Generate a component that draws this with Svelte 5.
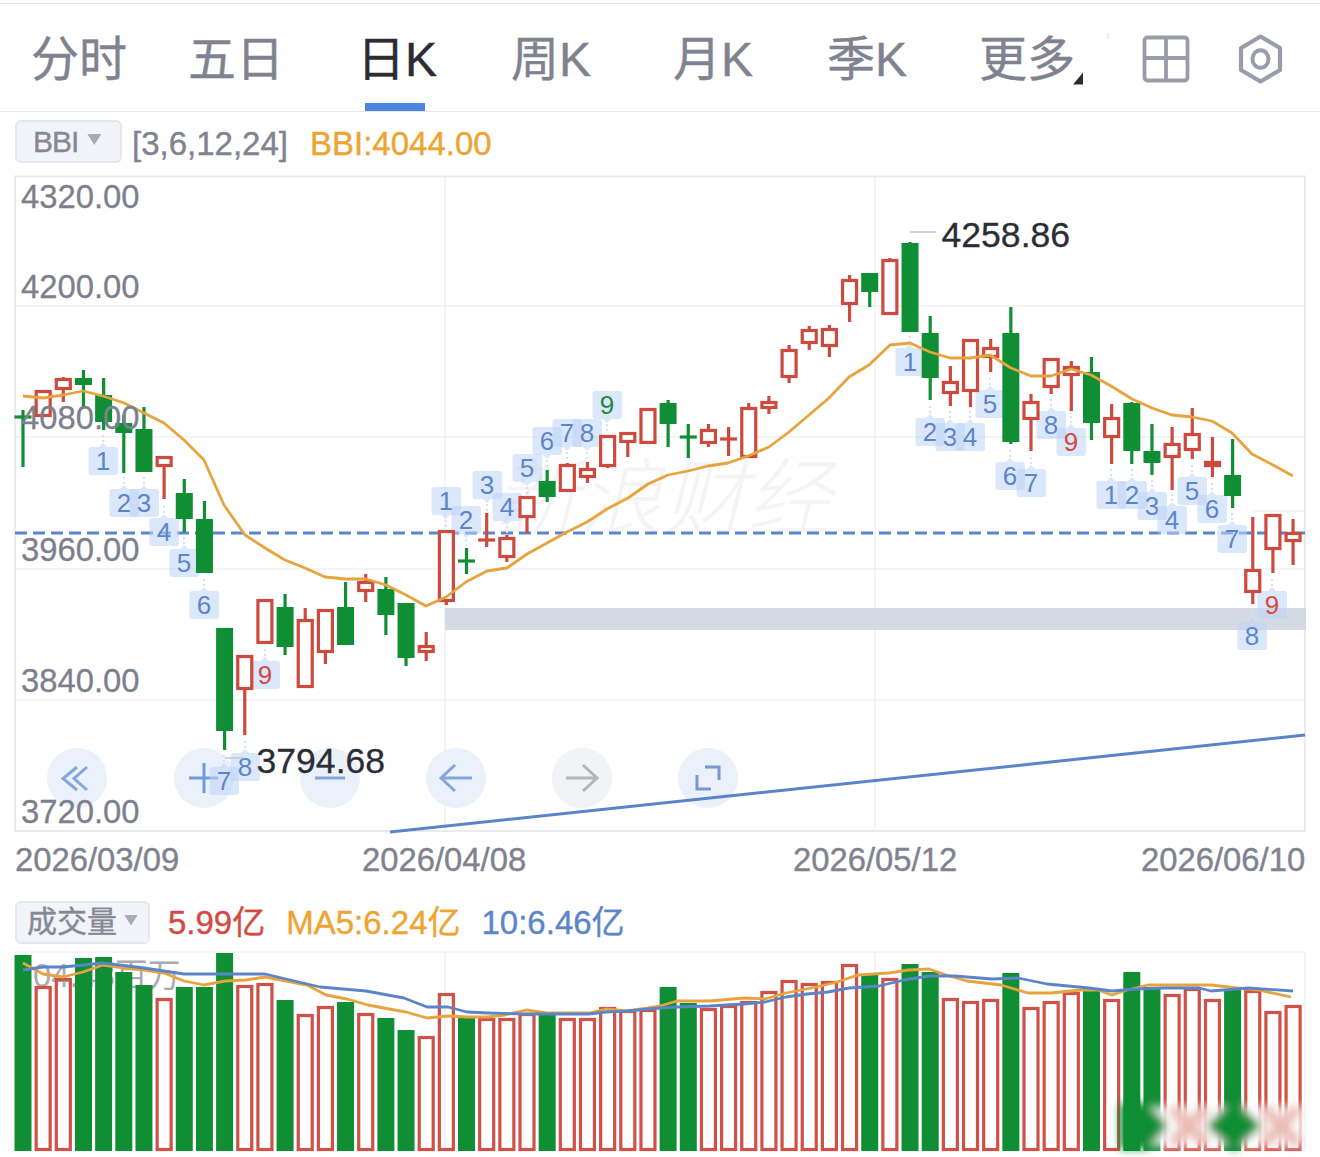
<script>
  const tabs = ["分时", "五日", "日K", "周K", "月K", "季K", "更多"];

  // kind, wick top, body top, body bottom, wick bottom
  const candles = [
    ["g", 410, 417, 417, 467], ["r", 390, 390, 417, 417], ["r", 377, 378, 390, 402], ["g", 370, 378, 385, 407],
    ["g", 378, 395, 422, 430], ["g", 415, 423, 433, 473], ["g", 407, 429, 472, 472], ["r", 456, 456, 467, 499],
    ["g", 479, 493, 519, 532], ["g", 501, 519, 573, 573], ["g", 628, 628, 731, 750], ["r", 655, 655, 690, 735],
    ["r", 599, 599, 644, 644], ["g", 594, 607, 647, 655], ["r", 608, 619, 688, 688], ["r", 609, 609, 653, 664],
    ["g", 582, 607, 645, 645], ["r", 574, 581, 592, 602], ["g", 577, 589, 615, 635], ["g", 603, 603, 658, 666],
    ["r", 632, 645, 653, 661], ["r", 530, 530, 602, 605], ["g", 548, 561, 561, 574], ["r", 513, 540, 540, 547],
    ["r", 535, 537, 558, 562], ["r", 496, 496, 518, 533], ["g", 470, 481, 497, 502], ["r", 463, 464, 492, 492],
    ["r", 462, 468, 478, 483], ["r", 435, 435, 467, 468], ["r", 432, 432, 443, 457], ["r", 408, 408, 444, 444],
    ["g", 400, 403, 424, 447], ["g", 424, 437, 437, 458], ["r", 424, 429, 444, 447], ["r", 427, 439, 439, 456],
    ["r", 403, 407, 458, 458], ["r", 396, 401, 409, 414], ["r", 345, 349, 378, 383], ["r", 326, 329, 344, 350],
    ["r", 325, 328, 347, 357], ["r", 275, 279, 305, 322], ["g", 273, 273, 292, 307], ["r", 258, 259, 315, 315],
    ["g", 242, 243, 332, 332], ["g", 316, 333, 378, 400], ["r", 366, 381, 394, 406], ["r", 339, 339, 392, 407],
    ["r", 339, 347, 358, 372], ["g", 307, 333, 442, 444], ["r", 394, 401, 420, 451], ["r", 358, 358, 388, 394],
    ["r", 361, 366, 376, 411], ["g", 357, 372, 423, 440], ["r", 404, 417, 438, 464], ["g", 402, 403, 451, 464],
    ["g", 424, 451, 463, 475], ["r", 427, 443, 458, 490], ["r", 408, 433, 451, 459], ["r", 437, 461, 467, 477],
    ["g", 439, 475, 496, 508], ["r", 517, 569, 593, 604], ["r", 514, 514, 550, 573], ["r", 519, 532, 542, 565]
  ];

  const cx = (i) => 23 + i * 20.16;

  // sequence markers: x, y, digit, colour, pointer side
  const marks = [
    [103, 461, "1"], [124, 503, "2"], [144, 503, "3"], [164, 532, "4"], [184, 563, "5"], [204, 605, "6"],
    [224, 781, "7"], [245, 767, "8"], [265, 675, "9", "red"],
    [446, 501, "1", "", 1], [466, 520, "2", "", 1], [487, 485, "3", "", 1], [507, 507, "4", "", 1], [527, 468, "5", "", 1],
    [547, 441, "6", "", 1], [567, 433, "7", "", 1], [587, 433, "8", "", 1], [607, 405, "9", "green", 1],
    [910, 362, "1"], [930, 432, "2"], [950, 437, "3"], [970, 437, "4"], [990, 404, "5"], [1010, 476, "6"], [1031, 483, "7"],
    [1051, 425, "8"], [1071, 442, "9", "red"],
    [1111, 495, "1"], [1132, 495, "2"], [1152, 506, "3"], [1172, 520, "4"], [1192, 491, "5"], [1212, 509, "6"], [1232, 539, "7"],
    [1252, 636, "8"], [1272, 605, "9", "red"]
  ];

  const bbi = "23,396 43,398 63,395 83,391 103,396 124,403 144,413 164,423 184,440 204,460 224,505 245,535 265,548 285,560 305,568 325,577 346,579 366,579 386,585 406,595 426,606 446,597 466,582 487,571 507,568 527,554 547,543 567,532 587,522 607,509 628,498 648,484 668,475 688,471 708,466 728,463 748,456 769,447 789,432 809,415 829,398 849,377 869,365 890,345 910,343 930,352 950,358 970,358 990,355 1011,368 1031,376 1051,376 1071,369 1091,375 1111,386 1132,399 1152,408 1172,415 1192,417 1212,421 1232,433 1252,454 1273,465 1293,476";

  const axis = [["4320.00", 208], ["4200.00", 298], ["4080.00", 429], ["3960.00", 561], ["3840.00", 692], ["3720.00", 823]];

  const volTops = [955, 986, 978, 958, 957, 972, 985, 998, 987, 987, 953, 985, 983, 1000, 1014, 1006, 1002, 1013, 1018, 1030, 1036, 993, 1018, 1018, 1018, 1013, 1012, 1018, 1018, 1007, 1010, 1009, 987, 1003, 1008, 1005, 1001, 991, 980, 983, 981, 964, 975, 978, 964, 972, 998, 1001, 999, 973, 1007, 1001, 992, 989, 999, 972, 987, 994, 988, 999, 990, 990, 1011, 1005];
  // green bars by index, everything else is red
  const volGreen = new Set([0, 3, 4, 5, 6, 8, 9, 10, 13, 16, 18, 19, 22, 26, 32, 33, 42, 44, 45, 49, 53, 55, 56, 60]);

  const ma5 = "23,963 43,974 63,977 83,972 103,965 124,968 144,970 164,973 184,981 204,985 225,981 246,980 265,977 286,981 307,985 326,995 347,999 368,1005 389,1009 406,1012 427,1018 448,1016 467,1017 488,1017 505,1015 526,1010 547,1013 568,1013 589,1013 606,1009 627,1011 648,1008 660,1006 677,1001 710,1001 744,998 765,999 786,993 816,987 837,982 858,975 889,973 908,970 929,969 946,975 967,981 1001,985 1028,993 1051,993 1081,990 1098,990 1112,995 1127,990 1148,985 1211,985 1237,988 1258,990 1291,997";
  const ma10 = "23,970 43,967 63,967 83,965 103,963 144,968 184,974 225,974 265,974 286,979 320,987 366,991 404,998 427,1007 448,1007 467,1012 488,1013 526,1014 589,1014 606,1012 627,1011 660,1008 677,1007 710,1006 744,1004 765,1002 786,997 807,994 828,992 849,988 879,986 904,980 929,976 955,976 992,979 1018,978 1047,984 1089,988 1112,991 1136,989 1165,988 1199,988 1211,991 1249,988 1293,991";
</script>

<div class="page">
  <header class="top">
    <div class="tabs">
      {#each tabs as t, i}
        <div class="tab" class:active={i === 2} class:more={i === 6}>{t}</div>
      {/each}
    </div>
    <svg class="tools" width="196" height="107" viewBox="1124 4 196 107">
      <line x1="1108" y1="33" x2="1108" y2="39" stroke="#dcdde2" />
      <rect x="1144.5" y="37.5" width="43" height="43" rx="3" fill="none" stroke="#9a9da9" stroke-width="3.800" />
      <path d="M1166 38v42M1145 58h42" stroke="#9a9da9" stroke-width="3.800" fill="none" />
      <path d="M1260.5 36.5l19.5 11.5v22l-19.5 11.5l-19.5-11.5v-22z" fill="none" stroke="#9a9da9" stroke-width="4.200" stroke-linejoin="round" />
      <ellipse cx="1260.5" cy="59" rx="8" ry="8.800" fill="none" stroke="#9a9da9" stroke-width="4" />
    </svg>
  </header>

  <div class="indicator">
    <div class="picker bbi">BBI<span class="caret"></span></div>
    <span class="params">[3,6,12,24]</span>
    <span class="orange">BBI:4044.00</span>
  </div>

  <svg class="chart" width="1320" height="660" viewBox="0 175 1320 660">
    <g stroke="#eef0f3" stroke-width="1.5">
      <line x1="15" y1="306" x2="1305" y2="306" />
      <line x1="15" y1="437" x2="1305" y2="437" />
      <line x1="15" y1="569" x2="1305" y2="569" />
      <line x1="15" y1="700" x2="1305" y2="700" />
      <line x1="1253" y1="511" x2="1305" y2="511" />
      <line x1="445" y1="176" x2="445" y2="831" />
      <line x1="875" y1="176" x2="875" y2="831" />
    </g>
    <rect x="15" y="176.5" width="1290" height="654.5" fill="none" stroke="#e9ebef" stroke-width="2" />

    <text class="watermark" x="495" y="528">新浪财经</text>

    <rect x="445" y="608" width="861" height="22" fill="#d5dbe5" />

    <g fill="#ebf1fb">
      <circle cx="77" cy="778" r="30" />
      <circle cx="204" cy="778" r="30" />
      <circle cx="330" cy="778" r="30" />
      <circle cx="456" cy="778" r="30" />
      <circle cx="708" cy="778" r="30" />
    </g>
    <circle cx="582" cy="778" r="30" fill="#f2f3f6" />
    <g fill="none" stroke="#83a6dc" stroke-width="3">
      <path d="M77 767L63 778.500L77 790M87 767L74 778.500L87 790" />
      <path d="M189 778h29M204 763v30" stroke="#6f9bdb" />
      <path d="M315 778h30" />
      <path d="M472 778h-30M455 765l-14 13l14 13" />
      <path d="M705 767h14v13M697 775v14h14" stroke="#7898d0" />
    </g>
    <path d="M566 778h30M583 765l14 13l-14 13" fill="none" stroke="#b3b5bd" stroke-width="3" />

    <line x1="15" y1="533" x2="1305" y2="533" stroke="#5b85d0" stroke-width="3" stroke-dasharray="12 6" />
    <line x1="390" y1="832" x2="1305" y2="735" stroke="#5a84c8" stroke-width="3" />

    {#each marks as [x, y, digit, tone, above]}
      <g>
        <rect class="mark" x={x - 14.500} y={y - 14} width="29.500" height="28" rx="3" />
        {#if above}
          <path class="mark" d="M{x - 4} {y + 14}h8l-4 4z" />
          <line class="dots" x1={x} y1={y + 19} x2={x} y2={y + 28} />
        {:else}
          <path class="mark" d="M{x - 4} {y - 14}h8l-4 -4z" />
          <line class="dots" x1={x} y1={y - 19} x2={x} y2={y - 28} />
        {/if}
        <text class="digit {tone}" {x} y={y + 9}>{digit}</text>
      </g>
    {/each}

    {#each candles as [kind, wt, bt, bb, wb], i}
      <g stroke={kind === "r" ? "#cc4a3e" : "#0f8e34"}>
        <line x1={cx(i)} x2={cx(i)} y1={wt} y2={wb} stroke-width="3.200" />
        {#if bt === bb}
          <line x1={cx(i) - 8.500} x2={cx(i) + 8.500} y1={bt} y2={bt} stroke-width="3.200" />
        {:else if kind === "r"}
          <rect x={cx(i) - 7} y={bt + 1.500} width="14" height={bb - bt - 3} fill="#fff" stroke-width="3.200" />
        {:else}
          <rect x={cx(i) - 8.500} y={bt} width="17" height={bb - bt} fill="#0f8e34" stroke="none" />
        {/if}
      </g>
    {/each}

    <polyline points={bbi} fill="none" stroke="#e7a33e" stroke-width="2.800" stroke-linejoin="round" />

    <line x1="910" y1="232" x2="936" y2="232" stroke="#c4c5c9" stroke-width="1.500" />
    <line x1="225" y1="758" x2="244" y2="758" stroke="#c4c5c9" stroke-width="1.500" />
    <text class="peak" x="941.500" y="247">4258.86</text>
    <text class="peak" x="256.500" y="773">3794.68</text>

    {#each axis as [label, y]}
      <text class="axis" x="21" {y}>{label}</text>
    {/each}
  </svg>

  <div class="dates">
    <span>2026/03/09</span>
    <span>2026/04/08</span>
    <span>2026/05/12</span>
    <span>2026/06/10</span>
  </div>

  <div class="indicator vol-head">
    <div class="picker vol">成交量<span class="caret"></span></div>
    <span class="red">5.99亿</span>
    <span class="orange">MA5:6.24亿</span>
    <span class="blue">10:6.46亿</span>
  </div>

  <svg class="chart" width="1320" height="207" viewBox="0 950 1320 207">
    <defs>
      <filter id="smear" x="-10%" y="-20%" width="120%" height="140%">
        <feGaussianBlur stdDeviation="4" />
      </filter>
    </defs>
    <g stroke="#eef0f3" stroke-width="1.500">
      <line x1="15" y1="952" x2="1305" y2="952" />
      <line x1="445" y1="952" x2="445" y2="1151" />
      <line x1="875" y1="952" x2="875" y2="1151" />
      <line x1="1305" y1="952" x2="1305" y2="1151" />
    </g>
    <text class="ghost" x="33" y="987">04.43百万</text>

    {#each volTops as top, i}
      {#if volGreen.has(i)}
        <rect x={cx(i) - 8.500} y={top} width="17" height={1151 - top} fill="#0f8e34" />
      {:else}
        <rect x={cx(i) - 7} y={top + 1.500} width="14" height={1151 - top - 3} fill="none" stroke="#cf5147" stroke-width="3.200" />
      {/if}
    {/each}

    <polyline points={ma5} fill="none" stroke="#e7a33e" stroke-width="2.800" stroke-linejoin="round" />
    <polyline points={ma10} fill="none" stroke="#5c84c8" stroke-width="2.800" stroke-linejoin="round" />

    <g filter="url(#smear)">
      <rect x="1122" y="1106" width="183" height="40" fill="#fff" opacity="0.85" />
      <path d="M1172 1108l34 36M1206 1108l-34 36M1264 1108l34 36M1298 1108l-34 36" stroke="#eabbb5" stroke-width="12" fill="none" />
      <path d="M1120 1103h28l20 23l-20 23h-28z" fill="#0f8e34" />
      <path d="M1234 1099l28 27l-28 25l-28 -25z" fill="#0f8e34" />
    </g>
  </svg>
</div>

<style>
  :global(body) {
    margin: 0;
    background: #fff;
  }

  .page {
    position: relative;
    width: 1320px;
    height: 1157px;
    overflow: hidden;
    font-family: "Liberation Sans", "Noto Sans CJK SC", sans-serif;
    color: #80838f;
    -webkit-text-stroke: 0.4px;
  }

  .top {
    display: flex;
    box-sizing: border-box;
    height: 109px;
    margin-top: 3px;
    border-top: 1px solid #e5e6ea;
    border-bottom: 1px solid #e7e8ec;
  }

  .tabs {
    display: grid;
    grid-template-columns: 158px 156px 166px 142px 182px 126px 194px;
    width: 1124px;
    align-items: center;
    padding-top: 4px;
    box-sizing: border-box;
  }

  .tab {
    position: relative;
    font-size: 48px;
    line-height: 1;
    text-align: center;
  }

  .tab.active {
    color: #2b2c33;
  }

  .tab.active::after {
    content: "";
    position: absolute;
    left: 51px;
    top: 67px;
    width: 60px;
    height: 8px;
    background: #4a86dc;
  }

  .tab.more::after {
    content: "";
    position: absolute;
    left: 143px;
    top: 37px;
    width: 10px;
    height: 12px;
    background: #2b2c33;
    clip-path: polygon(100% 0, 100% 100%, 0 100%);
  }

  .tools {
    display: block;
    overflow: visible;
  }

  .indicator {
    display: flex;
    align-items: center;
    height: 63px;
    padding-left: 15px;
    font-size: 33px;
    line-height: 1;
  }

  .picker {
    display: flex;
    align-items: center;
    box-sizing: border-box;
    height: 43px;
    margin-top: -4px;
    background: #f3f4fa;
    border: 2px solid #e4e6f0;
    border-radius: 6px;
    color: #868995;
  }

  .bbi {
    width: 107px;
    padding-left: 16px;
    font-size: 30px;
    letter-spacing: -1px;
  }

  .vol {
    width: 135px;
    padding-left: 10px;
    font-size: 30px;
  }

  .caret {
    width: 14px;
    height: 11px;
    margin-left: 9px;
    margin-top: -4px;
    background: #a9abb8;
    clip-path: polygon(0 0, 100% 0, 50% 100%);
  }

  .vol .caret {
    margin-left: 7px;
  }

  .params {
    margin-left: 10px;
    color: #80838f;
  }

  .orange {
    margin-left: 22px;
    color: #eda433;
  }

  .vol-head {
    box-sizing: border-box;
    height: 65px;
    padding-top: 9px;
  }

  .vol-head .picker {
    margin-top: 0;
  }

  .vol-head .red {
    margin-left: 18px;
    color: #d34b3f;
  }

  .vol-head .orange {
    margin-left: 21px;
  }

  .vol-head .blue {
    margin-left: 21px;
    color: #5b86c9;
  }

  .chart {
    display: block;
    overflow: hidden;
  }

  .dates {
    display: grid;
    grid-template-columns: 347px 431px 348px auto;
    align-items: center;
    height: 50px;
    padding-left: 15px;
    font-size: 32.800px;
    line-height: 1;
  }

  .mark {
    fill: rgba(190, 212, 245, 0.55);
  }

  .dots {
    stroke: #d4e0f5;
    stroke-width: 2;
    stroke-dasharray: 2 3;
  }

  .digit {
    font-size: 26px;
    text-anchor: middle;
    fill: #5b86c9;
    stroke-width: 0;
  }

  .digit.red {
    fill: #d34b3f;
  }

  .digit.green {
    fill: #1b8e3f;
  }

  .axis {
    font-size: 32.800px;
    fill: #7d808c;
    stroke: #7d808c;
    stroke-width: 0.3;
  }

  .peak {
    font-size: 35.600px;
    fill: #2a2d36;
    stroke: #2a2d36;
    stroke-width: 0.3;
  }

  .watermark {
    font-size: 84px;
    font-style: italic;
    font-weight: 300;
    fill: #f3f4f6;
    -webkit-text-stroke: 0;
  }

  .ghost {
    font-size: 32.800px;
    fill: #a9abb3;
  }
</style>
